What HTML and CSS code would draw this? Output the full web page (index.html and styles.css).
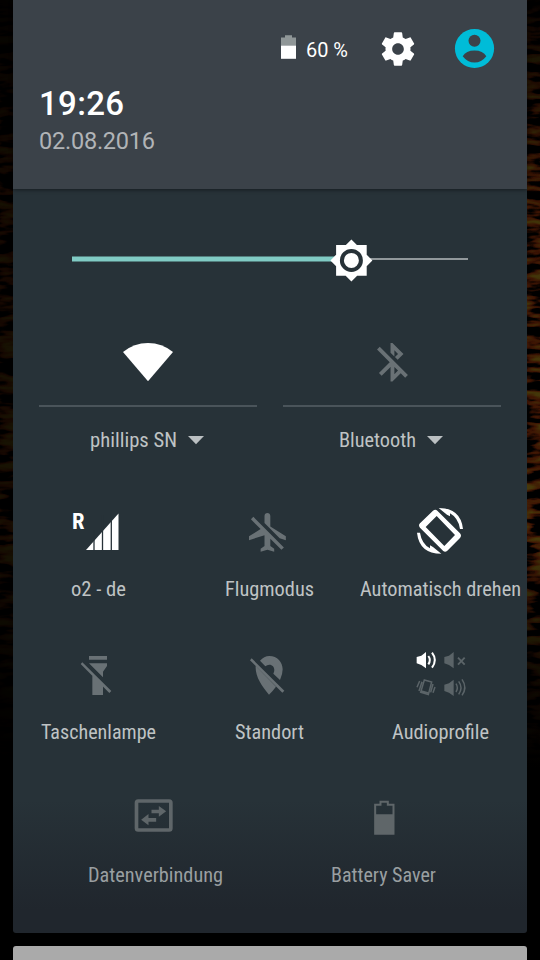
FILE: index.html
```
<!DOCTYPE html>
<html lang="de">
<head>
<meta charset="utf-8">
<title>Schnelleinstellungen</title>
<link rel="stylesheet" href="styles.css">
</head>
<body>
<svg class="wallpaper" width="540" height="960" aria-hidden="true">
  <defs>
    <filter id="grain" x="0" y="0" width="100%" height="100%" color-interpolation-filters="sRGB">
      <feTurbulence type="fractalNoise" baseFrequency="0.03 0.11" numOctaves="3" seed="8"/>
      <feColorMatrix values="3 0 0 0 -1.3  1.7 0 0 0 -.74  .6 0 0 0 -.26  0 0 0 0 1"/>
      <feComponentTransfer><feFuncR type="table" tableValues="0 .25 .27 .28"/><feFuncG type="table" tableValues="0 .22 .24"/><feFuncB type="table" tableValues="0 .2"/></feComponentTransfer>
    </filter>
    <linearGradient id="fade" x2="0" y2="1">
      <stop offset="0" stop-opacity=".85"/><stop offset=".2" stop-opacity=".1"/>
      <stop offset=".56" stop-opacity="0"/><stop offset=".7" stop-opacity=".75"/><stop offset=".8"/>
    </linearGradient>
  </defs>
  <rect width="540" height="960" filter="url(#grain)"/>
  <rect width="540" height="960" fill="url(#fade)"/>
  <rect width="13" height="960" opacity=".65"/>
</svg>
<main class="shade">
  <header class="header">
    <div class="status">
      <svg class="battery" width="16" height="24" viewBox="281 35.5 16 24"><path fill="#8f9697" d="M281 38h4v-2.300h7V38h4v8h-15z"/><path fill="#fff" d="M281 46h15v13.300h-15z"/></svg>
      <svg class="percent" width="43" height="24"><text x="0" y="18" textLength="42" lengthAdjust="spacingAndGlyphs">60 %</text></svg>
      <svg class="gear" width="40" height="40" viewBox="0 0 24 24"><path fill="#fff" d="M19.43 12.980c.04-.32.07-.64.07-.98s-.03-.66-.07-.98l2.110-1.650c.19-.15.24-.42.12-.64l-2-3.460c-.12-.22-.39-.3-.61-.22l-2.490 1c-.52-.4-1.080-.73-1.690-.98l-.38-2.650C14.460 2.180 14.250 2 14 2h-4c-.25 0-.46.18-.49.42l-.38 2.650c-.61.25-1.170.59-1.690.98l-2.490-1c-.23-.09-.49 0-.61.22l-2 3.460c-.13.22-.07.49.12.64l2.110 1.650c-.04.32-.07.65-.07.98s.03.66.07.98l-2.110 1.650c-.19.15-.24.42-.12.64l2 3.460c.12.22.39.3.61.22l2.490-1c.52.4 1.080.73 1.690.98l.38 2.650c.03.24.24.42.49.42h4c.25 0 .46-.18.49-.42l.38-2.650c.61-.25 1.170-.59 1.690-.98l2.490 1c.23.09.49 0 .61-.22l2-3.460c.12-.22.07-.49-.12-.64l-2.110-1.650zM12 15.500c-1.930 0-3.500-1.570-3.500-3.500s1.570-3.500 3.500-3.500 3.500 1.570 3.500 3.500-1.570 3.500-3.500 3.500z"/></svg>
      <svg class="user" width="40" height="40" viewBox="455 28 40 40"><circle cx="474.500" cy="48.500" r="19.600" fill="#00bcd8"/><circle cx="474.500" cy="40.800" r="6" fill="#3b4249"/><path fill="#3b4249" d="M462.700 56.300Q466 50.500 474.500 50.500T486.300 56.300Q481.500 62.600 474.500 62.600T462.700 56.300z"/></svg>
    </div>
    <svg class="clock" width="200" height="70"><text class="time" x="0" y="30" textLength="85">19:26</text><text class="date" x="0" y="64" textLength="116">02.08.2016</text></svg>
  </header>

  <section class="brightness">
    <svg width="514" height="60" viewBox="13 230 514 60"><path fill="#91989b" d="M351 258h117v2H351z"/><path fill="#80cbc4" d="M72 256.500h279v5H72z"/><g transform="translate(351.400 260.400)"><path fill="#fff" d="M-15.300-15.300h30.600v30.600h-30.600zM0-21 21 0 0 21-21 0z"/><circle r="9.500" fill="#fff" stroke="#273238" stroke-width="4"/></g></svg>
  </section>

  <section class="row dual">
    <div class="tile">
      <svg class="icon" width="60" height="60" viewBox="118 332 60 60"><path fill="#fff" d="M148 381.300 123 352Q134 343 148 343T173 352z"/></svg>
      <hr>
      <div class="caption"><svg class="label" width="87" height="30"><text y="21" textLength="87" lengthAdjust="spacingAndGlyphs">phillips SN</text></svg><svg class="caret" width="16" height="9"><path d="M0 0h16L8 8.300z"/></svg></div>
    </div>
    <div class="tile">
      <svg class="icon dim" width="60" height="60" viewBox="362 332 60 60"><path transform="translate(369.300 339.100) scale(1.930)" d="M13 5.830l1.880 1.880-1.600 1.600 1.410 1.410 3.020-3.020L12 2h-1v5.030l2 2v-3.200zM5.410 4L4 5.410 10.590 12 5 17.590 6.410 19 11 14.410V22h1l4.290-4.290 2.300 2.290L20 18.590 5.410 4zM13 18.170v-3.760l1.880 1.880L13 18.170z"/></svg>
      <hr>
      <div class="caption"><svg class="label" width="77" height="30"><text y="21" textLength="77" lengthAdjust="spacingAndGlyphs">Bluetooth</text></svg><svg class="caret" width="16" height="9"><path d="M0 0h16L8 8.300z"/></svg></div>
    </div>
  </section>

  <section class="row triple">
    <div class="tile">
      <svg class="icon" width="60" height="60" viewBox="68 501 60 60"><text class="roaming" x="72" y="529" textLength="12.500" lengthAdjust="spacingAndGlyphs">R</text><path fill="#fff" d="M86 550 118.500 513.500V550z"/><path stroke="#273238" stroke-width="1.300" d="M94 530v21M102.500 515v36M111.300 510v41"/></svg>
      <svg class="label" width="55" height="30"><text y="21" textLength="55" lengthAdjust="spacingAndGlyphs">o2 - de</text></svg>
    </div>
    <div class="tile">
      <svg class="icon dim" width="60" height="60" viewBox="239 501 60 60"><path transform="translate(245.100 509.100) scale(1.940)" d="M13 9V3.500c0-.83-.67-1.500-1.500-1.500S10 2.670 10 3.500v3.680l7.830 7.830L21 16v-2l-8-5zM3 5.270l4.990 4.990L2 14v2l8-2.500V19l-2 1.500V22l3.500-1 3.500 1v-1.500L13 19v-3.730L18.730 21 20 19.730 4.270 4 3 5.270z"/></svg>
      <svg class="label" width="89" height="30"><text y="21" textLength="89" lengthAdjust="spacingAndGlyphs">Flugmodus</text></svg>
    </div>
    <div class="tile">
      <svg class="icon" width="60" height="60" viewBox="410 501 60 60"><g transform="translate(350 490) scale(.33333)" fill="#fff"><path fill-rule="evenodd" d="M249 62Q256 57 262 62L330 130Q336 137 330 144L292 182Q285 188 279 182L210 113Q204 106 210 100zM260 78 227 111 283 168 315 135z"/><path d="M266 54Q332 54 339 117H330Q325 84 300 70V79L291 74z"/><path transform="rotate(180 270 122.500)" d="M266 54Q332 54 339 117H330Q325 84 300 70V79L291 74z"/></g></svg>
      <svg class="label" width="161" height="30"><text y="21" textLength="161" lengthAdjust="spacingAndGlyphs">Automatisch drehen</text></svg>
    </div>
  </section>

  <section class="row triple">
    <div class="tile">
      <svg class="icon dim" width="60" height="60" viewBox="68 644 60 60"><path transform="translate(30 640) scale(.33333)" d="M177 48h54v11h-54zM177 70h54v8l-12 17v17zM187 104l32 32v29h-32zM157 67l87 86-6 6-86-87z"/></svg>
      <svg class="label" width="115" height="30"><text y="21" textLength="115" lengthAdjust="spacingAndGlyphs">Taschenlampe</text></svg>
    </div>
    <div class="tile">
      <svg class="icon dim" width="60" height="60" viewBox="239 644 60 60"><path transform="translate(30 640) scale(.33333)" d="M665 55l98 97-6 6-97-97zM690 62Q702 48 718 48C742 48 758 67 758 88Q758 103 750 120L730 101C737 88 731 74 718 74Q711 74 706 79zM677 78l61 62Q730 151 717 164C695 138 675 108 677 78z"/></svg>
      <svg class="label" width="69" height="30"><text y="21" textLength="69" lengthAdjust="spacingAndGlyphs">Standort</text></svg>
    </div>
    <div class="tile">
      <svg class="icon" width="60" height="60" viewBox="410 644 60 60"><g transform="translate(380 640) scale(.33333)" fill="none" stroke="#5b6468" stroke-width="4.500"><g stroke="#fff"><path fill="#fff" stroke="none" d="M110 51 124 47 138 36V85L124 75 110 70z"/><path stroke-width="6" d="M145 48q9 12 0 25M156 38q17 22 0 45"/></g><path fill="#5b6468" stroke="none" d="M193 51 207 47 221 36V85L207 75 193 70zM193 134 207 130 221 119V168L207 158 193 153z"/><path stroke-width="5.500" d="M234 53l20 21M254 53l-20 21"/><path d="M228 131q8 12 0 25M236 124q14 19 0 39M246 118q17 25 0 48"/><path d="M133 120 155 126 145 164 122 157zM124 153l21 6M119 123l-8 19M126 125l-9 28M159 132l-7 25M165 141l-6 17"/></g></svg>
      <svg class="label" width="97" height="30"><text y="21" textLength="97" lengthAdjust="spacingAndGlyphs">Audioprofile</text></svg>
    </div>
  </section>

  <section class="row pair">
    <div class="tile">
      <svg class="icon low" width="60" height="60" viewBox="125.500 787 60 60"><g transform="translate(70 780) scale(.33333)"><rect x="198" y="63" width="103" height="87" rx="5" fill="none" stroke="#5f6669" stroke-width="11"/><path d="M243 89h22V78l22 16-22 16v-10h-22zM257 114h-23v-12l-22 17 22 17v-11h23z"/></g></svg>
      <svg class="label" width="135" height="30"><text y="21" textLength="135" lengthAdjust="spacingAndGlyphs">Datenverbindung</text></svg>
    </div>
    <div class="tile">
      <svg class="icon low" width="60" height="60" viewBox="353.500 787 60 60"><path fill-rule="evenodd" transform="translate(70 780) scale(.33333)" d="M911 71h16v-9h28v9h17v93h-61zM917 77v26h49V77h-17v-9h-16v9z"/></svg>
      <svg class="label" width="105" height="30"><text y="21" textLength="105" lengthAdjust="spacingAndGlyphs">Battery Saver</text></svg>
    </div>
  </section>
</main>
<div class="notification"></div>
</body>
</html>
```
FILE: styles.css
```
* { box-sizing: border-box; }
body {
  margin: 0;
  width: 540px;
  height: 960px;
  overflow: hidden;
  background: #000;
  font-family: "Roboto Condensed", Roboto, sans-serif;
}
svg { display: block; flex: none; overflow: visible; }
.wallpaper { position: absolute; inset: 0; z-index: -1; }
.shade {
  width: 514px;
  height: 933px;
  margin: 0 13px;
  border-radius: 0 0 3px 3px;
  background: linear-gradient(#273238 0 800px, #20262d 910px);
}
.header {
  height: 189px;
  background: #3b4249;
  box-shadow: 0 1px 4px rgba(0, 0, 0, .45);
}
.status {
  display: flex;
  justify-content: flex-end;
  align-items: flex-start;
  height: 74px;
  padding: 28px 32px 0 0;
}
.battery { margin: 7px 9px 0 0; }
.percent { margin: 11px 29px 0 0; fill: #fff; font: 20.500px Roboto, sans-serif; }
.gear { margin: 1px 37px 0 0; }
.clock { margin: 11px 0 0 26px; font-family: Roboto, sans-serif; }
.time { fill: #fff; font-size: 33px; font-weight: 500; }
.date { fill: #b1b4b7; font-size: 23.500px; }
.brightness { height: 143px; padding-top: 41px; }
.row { display: grid; }
.tile { display: flex; flex-direction: column; align-items: center; min-width: 0; }
.dual {
  grid-template-columns: 218px 218px;
  column-gap: 26px;
  height: 169px;
  padding-left: 26px;
}
.triple { grid-template-columns: repeat(3, 171px); height: 143px; }
.triple .icon { margin-left: -1px; }
.triple .label, .pair .label { margin: 14px 1px 0 0; }
.pair { grid-template-columns: 228px 228px; height: 146px; padding-left: 29px; }
.pair .icon { margin-left: -1px; }
hr { width: 218px; height: 2px; margin: 13px 0 19px; border: 0; background: #4a545a; }
.caption { display: flex; margin-right: 2px; }
.caret { margin: 10px 0 0 11px; fill: #bbc0c2; }
.label { fill: #bfc3c4; font-size: 21px; font-stretch: 75%; }
.dim { fill: #697175; }
.low { fill: #5f6669; }
.pair .label { fill: #999fa1; }
.roaming { fill: #fff; font-size: 22.500px; font-weight: 700; }
.notification { height: 14px; margin: 13px 13px 0; border-radius: 3px 3px 0 0; background: #aaa; }
```
